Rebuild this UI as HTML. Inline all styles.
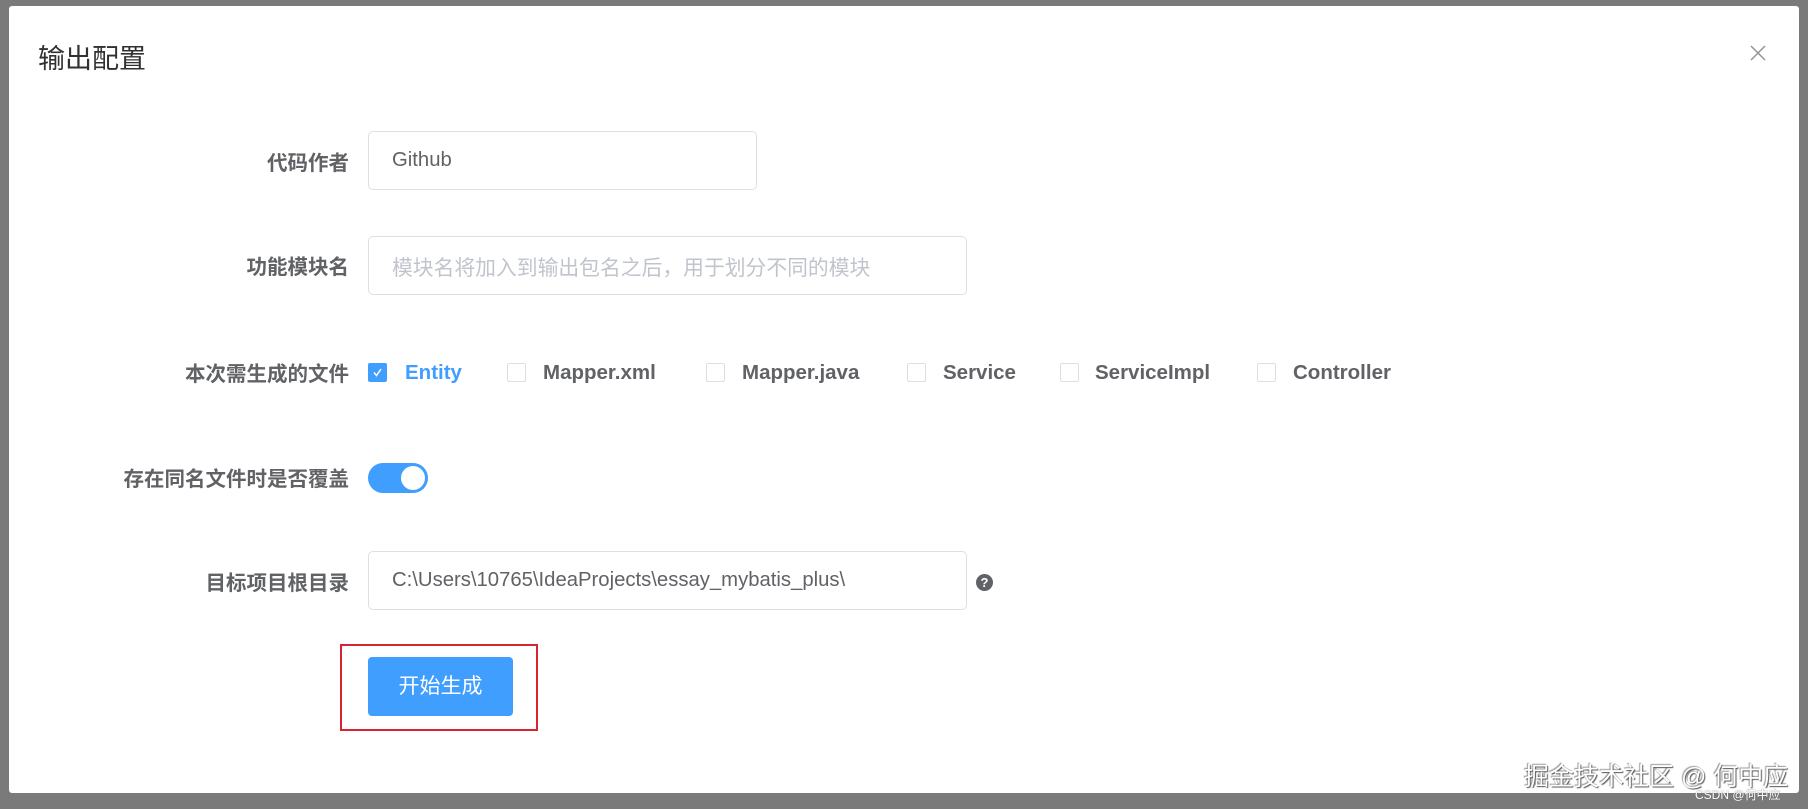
<!DOCTYPE html>
<html><head><meta charset="utf-8"><style>
*{margin:0;padding:0;box-sizing:border-box}
body{width:1808px;height:809px;background:#7a7a7a;position:relative;overflow:hidden;font-family:"Liberation Sans","Noto Sans CJK SC",sans-serif}
.dlg{position:absolute;left:9px;top:6px;width:1790px;height:787px;background:#fff;border-radius:3px}
.abs{position:absolute}
.title{left:38px;top:37px;font-size:27px;color:#303133}
.lbl{position:absolute;right:1459px;font-size:20.5px;font-weight:bold;color:#606266;white-space:nowrap;transform:translateY(-50%)}
.inp{position:absolute;left:368px;border:1px solid #dcdfe6;border-radius:5px;font-size:20.3px;color:#606266;padding-left:23px;display:flex;align-items:center;white-space:nowrap}
.cb{position:absolute;width:19px;height:19px;border:1px solid #dcdfe6;border-radius:2px;top:363px;background:#fff}
.ct{position:absolute;top:373px;transform:translateY(-50%);font-size:20.5px;font-weight:bold;color:#606266}
</style></head><body>
<div class="dlg"></div>
<div class="abs title">输出配置</div>
<svg class="abs" style="left:1750px;top:45px" width="16" height="16" viewBox="0 0 16 16"><path d="M1 1L15 15M15 1L1 15" stroke="#909399" stroke-width="1.5"/></svg>

<div class="lbl" style="top:161px">代码作者</div>
<div class="inp" style="top:131px;width:389px;height:59px">Github</div>

<div class="lbl" style="top:265px">功能模块名</div>
<div class="inp" style="top:236px;width:599px;height:59px;color:#c0c4cc;font-size:20.8px">模块名将加入到输出包名之后，用于划分不同的模块</div>

<div class="lbl" style="top:372px">本次需生成的文件</div>
<div class="cb" style="left:368px;background:#409eff;border-color:#409eff"><svg width="17" height="17" viewBox="0 0 17 17" style="position:absolute;left:0;top:0"><path d="M5 8.5L7.5 11.5L12 5" stroke="#fff" stroke-width="1.5" fill="none"/></svg></div>
<div class="ct" style="left:405px;color:#409eff">Entity</div>
<div class="cb" style="left:507px"></div><div class="ct" style="left:543px">Mapper.xml</div>
<div class="cb" style="left:706px"></div><div class="ct" style="left:742px">Mapper.java</div>
<div class="cb" style="left:907px"></div><div class="ct" style="left:943px">Service</div>
<div class="cb" style="left:1060px"></div><div class="ct" style="left:1095px">ServiceImpl</div>
<div class="cb" style="left:1257px"></div><div class="ct" style="left:1293px">Controller</div>

<div class="lbl" style="top:477px">存在同名文件时是否覆盖</div>
<div class="abs" style="left:368px;top:463px;width:60px;height:30px;border-radius:15px;background:#409eff"><div class="abs" style="right:3px;top:3px;width:24px;height:24px;border-radius:50%;background:#fff"></div></div>

<div class="lbl" style="top:581px">目标项目根目录</div>
<div class="inp" style="top:551px;width:599px;height:59px">C:\Users\10765\IdeaProjects\essay_mybatis_plus\</div>
<div class="abs" style="left:976px;top:574px;width:17px;height:17px;border-radius:50%;background:#606266;color:#fff;font-size:13px;font-weight:bold;text-align:center;line-height:17px">?</div>

<div class="abs" style="left:340px;top:644px;width:198px;height:87px;border:2px solid #d9232e"></div>
<div class="abs" style="left:368px;top:657px;width:145px;height:59px;background:#409eff;border-radius:4px;color:#fff;font-size:21px;text-align:center;line-height:59px">开始生成</div>

<div class="abs" style="left:1524px;top:757px;font-size:25px;color:#fff;text-shadow:1px 1px 1px #555,-1px -1px 1px #999">掘金技术社区 @ 何中应</div>
<div class="abs" style="left:1695px;top:786px;font-size:12px;color:#fff;text-shadow:0 0 1px #555">CSDN @何中应</div>
</body></html>
